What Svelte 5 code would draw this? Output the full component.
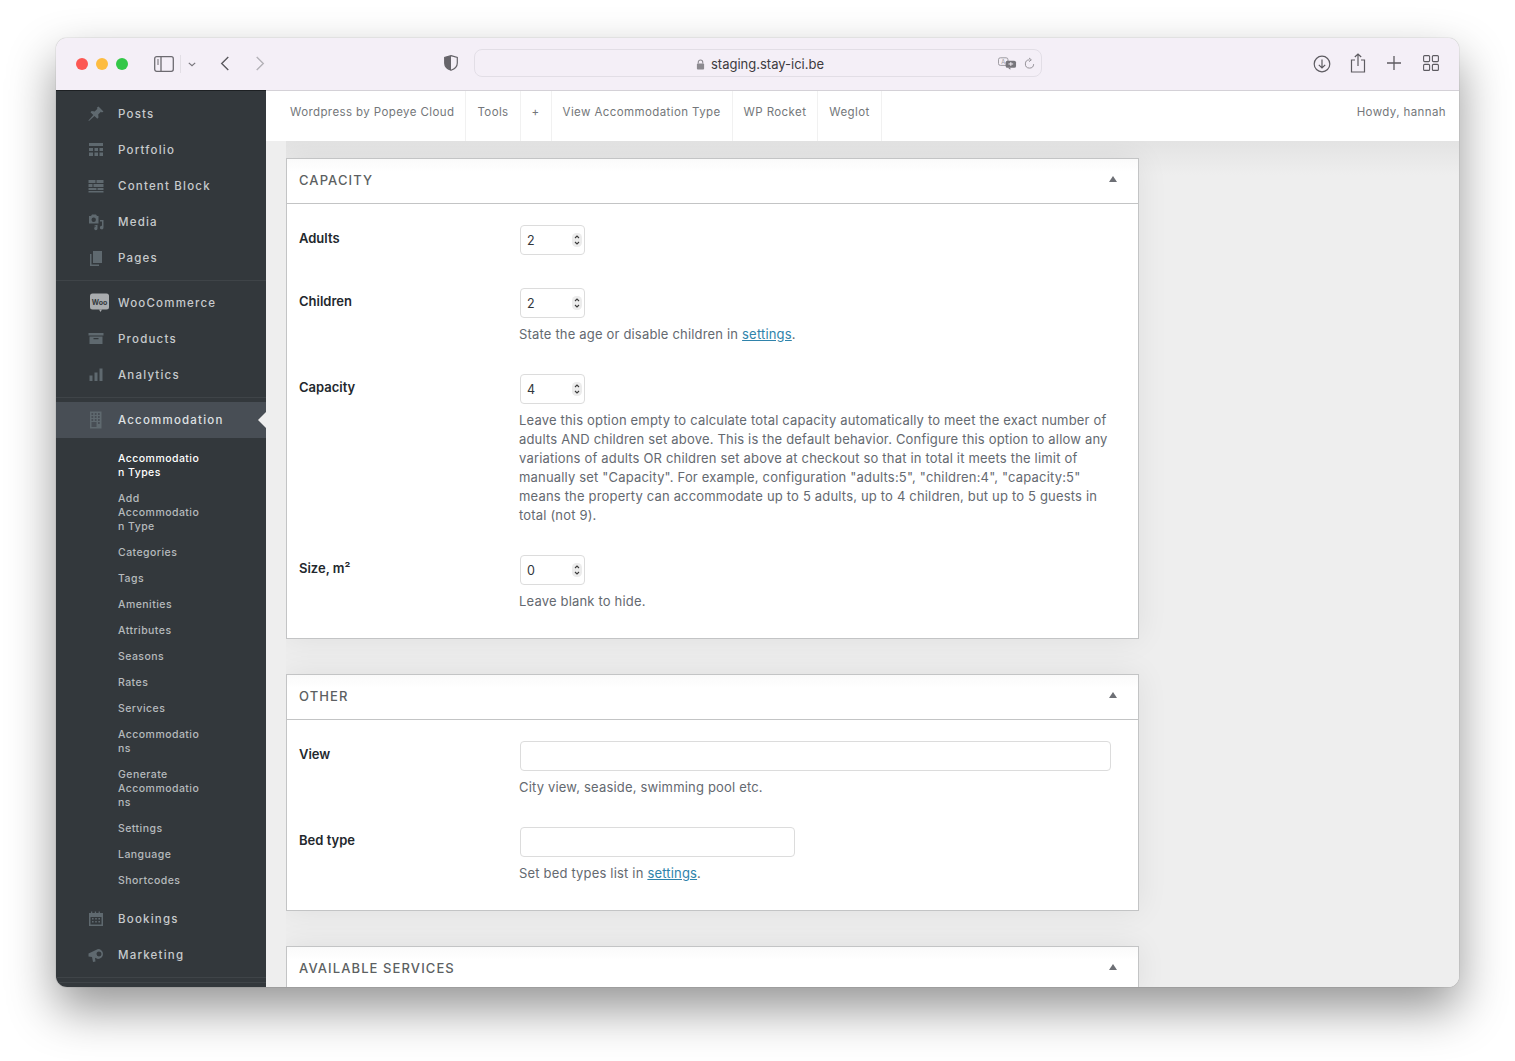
<script>
	const groupA = [
		{ label: 'Posts', icon: 'pin' },
		{ label: 'Portfolio', icon: 'portfolio' },
		{ label: 'Content Block', icon: 'block' },
		{ label: 'Media', icon: 'media' },
		{ label: 'Pages', icon: 'pages' }
	];
	const groupB = [
		{ label: 'WooCommerce', icon: 'woo' },
		{ label: 'Products', icon: 'box' },
		{ label: 'Analytics', icon: 'bars' }
	];
	const subItems = [
		{ label: 'Accommodatio\nn Types', current: true },
		{ label: 'Add\nAccommodatio\nn Type' },
		{ label: 'Categories' },
		{ label: 'Tags' },
		{ label: 'Amenities' },
		{ label: 'Attributes' },
		{ label: 'Seasons' },
		{ label: 'Rates' },
		{ label: 'Services' },
		{ label: 'Accommodatio\nns' },
		{ label: 'Generate\nAccommodatio\nns' },
		{ label: 'Settings' },
		{ label: 'Language' },
		{ label: 'Shortcodes' }
	];
	const groupC = [
		{ label: 'Bookings', icon: 'calendar' },
		{ label: 'Marketing', icon: 'megaphone' }
	];
	const topLinks = ['Wordpress by Popeye Cloud', 'Tools', '+', 'View Accommodation Type', 'WP Rocket', 'Weglot'];
</script>

{#snippet menuIcon(name)}
	<svg class="micon" class:woo={name === 'woo'} viewBox="0 0 20 20" width="20" height="20" aria-hidden="true">
		{#if name === 'pin'}
			<path d="M12.5 2.5l5 5-1.6.9-1-.6-2.7 2.7.3 3-1.2 1.2-2.8-2.8L3 17l-.6-.4 4.9-5.5-2.8-2.8L5.700 7.100l3 .3 2.700-2.700-.6-1z" />
		{:else if name === 'portfolio'}
			<path d="M3 3h14v3H3zM3 8h4v3H3zM8.500 8h3.500v3H8.500zM13.500 8h3.500v3h-3.500zM3 12.500h4V16H3zM8.500 12.500h3.500V16H8.500zM13.500 12.500h3.500V16h-3.500z" />
		{:else if name === 'block'}
			<path d="M2.500 4h7v3h-7zM10.500 4h7v3h-7zM2.500 8h4v3h-4zM7.500 8h10v3h-10zM2.500 12h8v2h-8zM11.500 12h6v2h-6zM2.500 15h15v1.500h-15z" />
		{:else if name === 'media'}
			<path fill-rule="evenodd" d="M3 4h2l1-1.500h4L11 4h1.500v7.500H3zM7.700 5.500a2.200 2.200 0 1 0 0 4.400 2.200 2.200 0 0 0 0-4.400z" />
			<path d="M14 8h3.500v7.500a1.800 1.800 0 1 1-1.500-1.700V9.500h-2zM8.500 13.500l3-.8v3.800a1.700 1.700 0 1 1-1.500-1.700v-.6l-1.500.4z" />
		{:else if name === 'pages'}
			<path d="M7 3h9v12H7z" />
			<path d="M4 6h1.500v10.500H13V18H4z" />
		{:else if name === 'woo'}
			<rect x="0" y="0.500" width="19" height="16" rx="2.500" fill="#a9acaf" />
			<path d="M9 16.500h3L10.500 19z" fill="#a9acaf" />
			<text x="9.500" y="11.500" class="wootext">Woo</text>
		{:else if name === 'box'}
			<path fill-rule="evenodd" d="M2.500 4h15v2.500h-15zM3.500 7.500h13V15h-13zM7.500 9v1.200h5V9z" />
		{:else if name === 'bars'}
			<path d="M3.500 10.500h3V16h-3zM8.500 7.500h3V16h-3zM13.500 3.500h3V16h-3z" />
		{:else if name === 'building'}
			<path fill-rule="evenodd" d="M4 1.500h11.500v17H4zM5.500 3v2h1.700V3zM8.800 3v2h1.700V3zM12 3v2h1.700V3zM5.500 6v2h1.700V6zM8.800 6v2h1.700V6zM12 6v2h1.700V6zM5.500 9v2h1.700V9zM8.800 9v2h1.700V9zM12 9v2h1.700V9zM5.500 12v5h5v-5zM12 12v2h1.700v-2z" />
		{:else if name === 'calendar'}
			<path fill-rule="evenodd" d="M3 4h2V2.500h1.300V4h2.500V2.500h1.300V4h2.500V2.500h1.300V4H17v13H3zM4.500 8v7.500h11V8zM6 9h1.600v1.600H6zM9.200 9h1.600v1.600H9.200zM12.400 9H14v1.600h-1.600zM6 12h1.600v1.600H6zM9.200 12h1.600v1.600H9.200zM12.400 12H14v1.600h-1.600z" />
		{:else if name === 'megaphone'}
			<path fill-rule="evenodd" d="M2.500 8.500L11 4.500a5 5 0 0 1 1-.5 5 5 0 0 1 0 10L9 12.800l.5 3.700-2.500.5-1-5-3.500-.5zM13 6.500a2.500 2.500 0 0 0 0 5 2.500 2.500 0 0 0 0-5z" />
		{/if}
	</svg>
{/snippet}

{#snippet spinner()}
	<svg class="spin" viewBox="0 0 10 14" width="10" height="14" aria-hidden="true">
		<rect width="10" height="14" rx="4.500" fill="#ececec" />
		<path d="M3 5l2-2 2 2M3 9l2 2 2-2" fill="none" stroke="#3c3c3c" stroke-width="1.100" />
	</svg>
{/snippet}

<div class="desktop">
	<div class="window">
		<header class="titlebar">
			<div class="traffic">
				<span class="dot red"></span>
				<span class="dot yellow"></span>
				<span class="dot green"></span>
			</div>
			<svg class="tb sidebar-toggle" viewBox="0 0 20 16" width="20" height="16">
				<rect x="0.700" y="0.700" width="18.600" height="14.600" rx="2" fill="none" stroke="#6c6a70" stroke-width="1.300" />
				<path d="M7 1v14" stroke="#6c6a70" stroke-width="1.300" />
				<path d="M3 4h2M3 6h2M3 8h2" stroke="#6c6a70" stroke-width="1" />
			</svg>
			<span class="tb-sep"></span>
			<svg class="tb chev" viewBox="0 0 10 6" width="8" height="5">
				<path d="M1 1l4 3.500L9 1" fill="none" stroke="#77757b" stroke-width="1.500" />
			</svg>
			<svg class="tb back" viewBox="0 0 10 16" width="10" height="15">
				<path d="M8.500 1L1.500 8l7 7" fill="none" stroke="#5d5b61" stroke-width="1.500" />
			</svg>
			<svg class="tb forward" viewBox="0 0 10 16" width="10" height="15">
				<path d="M1.500 1l7 7-7 7" fill="none" stroke="#b4b2b8" stroke-width="1.500" />
			</svg>
			<svg class="tb shield" viewBox="0 0 14 16" width="14" height="16">
				<path d="M7 .7L13.300 2.500V8c0 3.500-2.700 6-6.300 7.300C3.400 14 .7 11.500.7 8V2.500z" fill="none" stroke="#66646a" stroke-width="1.200" />
				<path d="M7 .7L.7 2.500V8c0 3.500 2.700 6 6.300 7.300z" fill="#66646a" />
			</svg>
			<div class="urlbar">
				<div class="url">
					<svg viewBox="0 0 10 12" width="9" height="11">
						<path d="M2.500 5V3.500a2.500 2.500 0 0 1 5 0V5" fill="none" stroke="#8c8a90" stroke-width="1.200" />
						<rect x="1" y="5" width="8" height="6.500" rx="1" fill="#8c8a90" />
					</svg>
					<span>staging.stay-ici.be</span>
				</div>
				<svg class="translate" viewBox="0 0 20 13" width="19" height="13">
					<rect x="0.500" y="0.500" width="10" height="8" rx="2" fill="none" stroke="#99979d" />
					<text x="5.500" y="7" class="trans-a">A</text>
					<rect x="8" y="3.500" width="11" height="7.500" rx="2" fill="#77757b" />
					<path d="M10.500 11l2.500 2v-2z" fill="#77757b" />
					<path d="M11 7h5M13.500 5v4" stroke="#f4eff7" stroke-width="1" />
				</svg>
				<svg class="reload" viewBox="0 0 12 13" width="11" height="13">
					<path d="M6 2.500a4.500 4.500 0 1 0 4.500 4.700" fill="none" stroke="#8c8a90" stroke-width="1" />
					<path d="M5.500.5l2.500 2-2.500 2" fill="none" stroke="#8c8a90" stroke-width="1" />
				</svg>
			</div>
			<svg class="tb download" viewBox="0 0 18 18" width="18" height="18">
				<circle cx="9" cy="9" r="7.800" fill="none" stroke="#5d5b61" stroke-width="1.200" />
				<path d="M9 4.500v8.500M5.800 9.800L9 13l3.200-3.200" fill="none" stroke="#5d5b61" stroke-width="1.200" />
			</svg>
			<svg class="tb share" viewBox="0 0 16 20" width="16" height="20">
				<path d="M5 7H1.500v12h13V7H11" fill="none" stroke="#5d5b61" stroke-width="1.200" />
				<path d="M8 13V1M4.800 4L8 1l3.200 3" fill="none" stroke="#5d5b61" stroke-width="1.200" />
			</svg>
			<svg class="tb plus" viewBox="0 0 14 14" width="14" height="14">
				<path d="M7 0v14M0 7h14" stroke="#5d5b61" stroke-width="1.300" />
			</svg>
			<svg class="tb tabs" viewBox="0 0 16 16" width="16" height="16">
				<g fill="none" stroke="#5d5b61" stroke-width="1.100">
					<rect x="0.600" y="0.600" width="6" height="6" rx="1" />
					<rect x="9.400" y="0.600" width="6" height="6" rx="1" />
					<rect x="0.600" y="9.400" width="6" height="6" rx="1" />
					<rect x="9.400" y="9.400" width="6" height="6" rx="1" />
				</g>
			</svg>
		</header>

		<div class="page">
			<aside class="sidebar">
				<ul class="menu">
					{#each groupA as item}
						<li class="item">{@render menuIcon(item.icon)}<span>{item.label}</span></li>
					{/each}
				</ul>
				<div class="menu-sep"></div>
				<ul class="menu">
					{#each groupB as item}
						<li class="item">{@render menuIcon(item.icon)}<span>{item.label}</span></li>
					{/each}
				</ul>
				<div class="menu-sep"></div>
				<div class="item active">{@render menuIcon('building')}<span>Accommodation</span></div>
				<ul class="submenu">
					{#each subItems as sub}
						<li class:current={sub.current}>{sub.label}</li>
					{/each}
				</ul>
				<ul class="menu">
					{#each groupC as item}
						<li class="item">{@render menuIcon(item.icon)}<span>{item.label}</span></li>
					{/each}
				</ul>
				<div class="menu-sep"></div>
				<div class="menu-sep"></div>
			</aside>

			<main class="main">
				<nav class="topbar">
					{#each topLinks as link}
						<span class="toplink">{link}</span>
					{/each}
					<span class="howdy">Howdy, hannah</span>
				</nav>

				<div class="content">
					<div class="boxes">
						<section class="panel">
							<h2 class="panel-title">CAPACITY<span class="caret"></span></h2>
							<div class="panel-body">
								<div class="row">
									<strong>Adults</strong>
									<div>
										<div class="input number">2{@render spinner()}</div>
									</div>
								</div>
								<div class="row">
									<strong>Children</strong>
									<div>
										<div class="input number">2{@render spinner()}</div>
										<p class="desc">State the age or disable children in <a href="#settings">settings</a>.</p>
									</div>
								</div>
								<div class="row">
									<strong>Capacity</strong>
									<div>
										<div class="input number">4{@render spinner()}</div>
										<p class="desc">Leave this option empty to calculate total capacity automatically to meet the exact number of<br />adults AND children set above. This is the default behavior. Configure this option to allow any<br />variations of adults OR children set above at checkout so that in total it meets the limit of<br />manually set "Capacity". For example, configuration "adults:5", "children:4", "capacity:5"<br />means the property can accommodate up to 5 adults, up to 4 children, but up to 5 guests in<br />total (not 9).</p>
									</div>
								</div>
								<div class="row last">
									<strong>Size, m²</strong>
									<div>
										<div class="input number">0{@render spinner()}</div>
										<p class="desc">Leave blank to hide.</p>
									</div>
								</div>
							</div>
						</section>

						<section class="panel">
							<h2 class="panel-title">OTHER<span class="caret"></span></h2>
							<div class="panel-body">
								<div class="row">
									<strong>View</strong>
									<div>
										<div class="input wide"></div>
										<p class="desc">City view, seaside, swimming pool etc.</p>
									</div>
								</div>
								<div class="row last">
									<strong>Bed type</strong>
									<div>
										<div class="input medium"></div>
										<p class="desc">Set bed types list in <a href="#settings">settings</a>.</p>
									</div>
								</div>
							</div>
						</section>

						<section class="panel">
							<h2 class="panel-title">AVAILABLE SERVICES<span class="caret"></span></h2>
						</section>
					</div>
				</div>
			</main>
		</div>
	</div>
</div>

<style>
	:global(body) {
		background: #fff;
	}
	.desktop {
		height: 1061px;
		box-sizing: border-box;
		padding: 38px 0 0 56px;
		overflow: hidden;
	}
	.window {
		width: 1403px;
		height: 949px;
		border-radius: 11px;
		overflow: hidden;
		display: flex;
		flex-direction: column;
		box-shadow: 0 22px 48px rgba(0, 0, 0, 0.42), 0 0 1px rgba(0, 0, 0, 0.5);
		font-family: Inter, "Liberation Sans", sans-serif;
	}

	/* browser chrome */
	.titlebar {
		height: 53px;
		flex: none;
		display: flex;
		align-items: center;
		background: #f4eff7;
		border-bottom: 1px solid #d4d1d7;
		box-sizing: border-box;
		padding-left: 20px;
	}
	.tb {
		flex: none;
	}
	.traffic {
		display: flex;
		gap: 8px;
	}
	.dot {
		width: 12px;
		height: 12px;
		border-radius: 50%;
	}
	.red { background: #fc5753; }
	.yellow { background: #fdbc40; }
	.green { background: #33c748; }
	.sidebar-toggle { margin-left: 26px; }
	.tb-sep {
		width: 1px;
		height: 18px;
		background: #e2dee5;
		margin-left: 6px;
	}
	.chev { margin-left: 7px; }
	.back { margin-left: 24px; margin-bottom: 2px; }
	.forward { margin-left: 25px; margin-bottom: 2px; }
	.shield { margin-left: 179px; margin-bottom: 2px; }
	.urlbar {
		width: 568px;
		height: 28px;
		box-sizing: border-box;
		margin: 0 0 2px 16px;
		border: 1px solid #e2dee6;
		border-radius: 8px;
		display: flex;
		align-items: center;
	}
	.url {
		flex: 1;
		display: flex;
		align-items: center;
		justify-content: center;
		gap: 6px;
		font-size: 13px;
		color: #3d3b40;
		padding: 2px 0 0 47px;
	}
	.translate { margin-right: 7px; }
	.trans-a { font-size: 6px; text-anchor: middle; fill: #99979d; }
	.reload { margin-right: 6px; }
	.download { margin-left: 271px; margin-bottom: 1px; }
	.share { margin-left: 19px; margin-bottom: 2px; }
	.plus { margin-left: 21px; margin-bottom: 2px; }
	.tabs { margin-left: 22px; margin-bottom: 2px; }

	.page {
		flex: 1;
		min-height: 0;
		display: flex;
	}

	/* admin menu */
	.sidebar {
		width: 210px;
		flex: none;
		background: #33383c;
		border-top: 1px solid #1d2023;
		margin-top: -1px;
		padding-top: 5px;
		box-sizing: border-box;
		overflow: hidden;
		position: relative;
	}
	.menu, .submenu {
		list-style: none;
		margin: 0;
		padding: 0;
	}
	.item {
		height: 36px;
		display: flex;
		align-items: center;
		padding-left: 30px;
		font-size: 11.500px;
		font-weight: 500;
		letter-spacing: 1.2px;
		color: #c7cacc;
		box-sizing: border-box;
		position: relative;
	}
	.item span {
		margin-left: 12px;
	}
	.micon {
		width: 20px;
		height: 20px;
		fill: #5f696f;
		flex: none;
	}
	.micon.woo {
		transform: translateX(4px);
	}
	.wootext {
		font-size: 7px;
		font-weight: 700;
		letter-spacing: 0;
		text-anchor: middle;
		fill: #33383c;
	}
	.menu-sep {
		height: 1px;
		background: #3f4448;
		margin: 4px 0;
	}
	.active {
		background: #484e55;
		color: #dfe1e3;
	}
	.active::after {
		content: "";
		position: absolute;
		right: 0;
		top: 10px;
		border: 8px solid transparent;
		border-left: 0;
		border-right-color: #eee;
	}
	.submenu {
		padding: 8px 0 7px;
	}
	.submenu li {
		padding: 6px 0 6px 62px;
		font-size: 10.500px;
		font-weight: 500;
		line-height: 14px;
		letter-spacing: 0.45px;
		color: #b6babd;
		white-space: pre-line;
	}
	.submenu .current {
		color: #fff;
	}

	/* top bar */
	.main {
		flex: 1;
		min-width: 0;
		display: flex;
		flex-direction: column;
		background: #eee;
	}
	.topbar {
		height: 50px;
		flex: none;
		background: #fff;
		display: flex;
		align-items: stretch;
		padding: 0 13px;
		font-size: 11.500px;
		letter-spacing: 0.4px;
		color: #74777a;
	}
	.toplink {
		display: flex;
		align-items: center;
		padding: 0 11px 8px;
		border-right: 1px solid #f1f1f1;
	}
	.howdy {
		margin-left: auto;
		display: flex;
		align-items: center;
		padding-bottom: 8px;
	}

	/* meta boxes */
	.content {
		flex: 1;
		min-height: 0;
		padding-left: 20px;
	}
	.boxes {
		height: 100%;
		box-sizing: border-box;
		padding-top: 17px;
		overflow: hidden;
		background: linear-gradient(#e3e3e3, #eee 34px);
	}
	.panel {
		width: 853px;
		box-sizing: border-box;
		background: #fff;
		border: 1px solid #c3c4c5;
		box-shadow: 0 0 30px rgba(0, 0, 0, 0.07);
		margin-bottom: 35px;
	}
	.panel-title {
		margin: 0;
		height: 44px;
		box-sizing: border-box;
		padding: 0 21px 2px 12px;
		display: flex;
		align-items: center;
		justify-content: space-between;
		font-size: 13px;
		font-weight: 500;
		letter-spacing: 1.1px;
		color: #5c5f62;
		background: linear-gradient(#fafafa, #fff 30%);
	}
	.caret {
		width: 0;
		height: 0;
		border: 4px solid transparent;
		border-top: 0;
		border-bottom: 6px solid #6d6f75;
		margin-top: -3px;
	}
	.panel-body {
		border-top: 1px solid #c3c4c5;
		padding: 21px 12px 27px;
	}
	.row {
		display: grid;
		grid-template-columns: 220px 1fr;
		margin-bottom: 30px;
	}
	.row.last {
		margin-bottom: 0;
	}
	.row strong {
		font-size: 13px;
		font-weight: 600;
		color: #23282d;
		line-height: 27px;
	}
	.input {
		height: 30px;
		box-sizing: border-box;
		margin: 0 0 3px 1px;
		border: 1px solid #dcdcdc;
		border-radius: 4px;
		background: #fff;
		font-size: 12.500px;
		color: #32373c;
		display: flex;
		align-items: center;
		justify-content: space-between;
		padding: 0 2px 0 6px;
	}
	.number { width: 65px; }
	.wide { width: 591px; }
	.medium { width: 275px; }
	.desc {
		margin: 7px 0 0;
		font-size: 13px;
		line-height: 19px;
		letter-spacing: 0.18px;
		color: #646970;
		white-space: nowrap;
	}
	.desc a {
		color: #2f83ab;
	}
</style>
